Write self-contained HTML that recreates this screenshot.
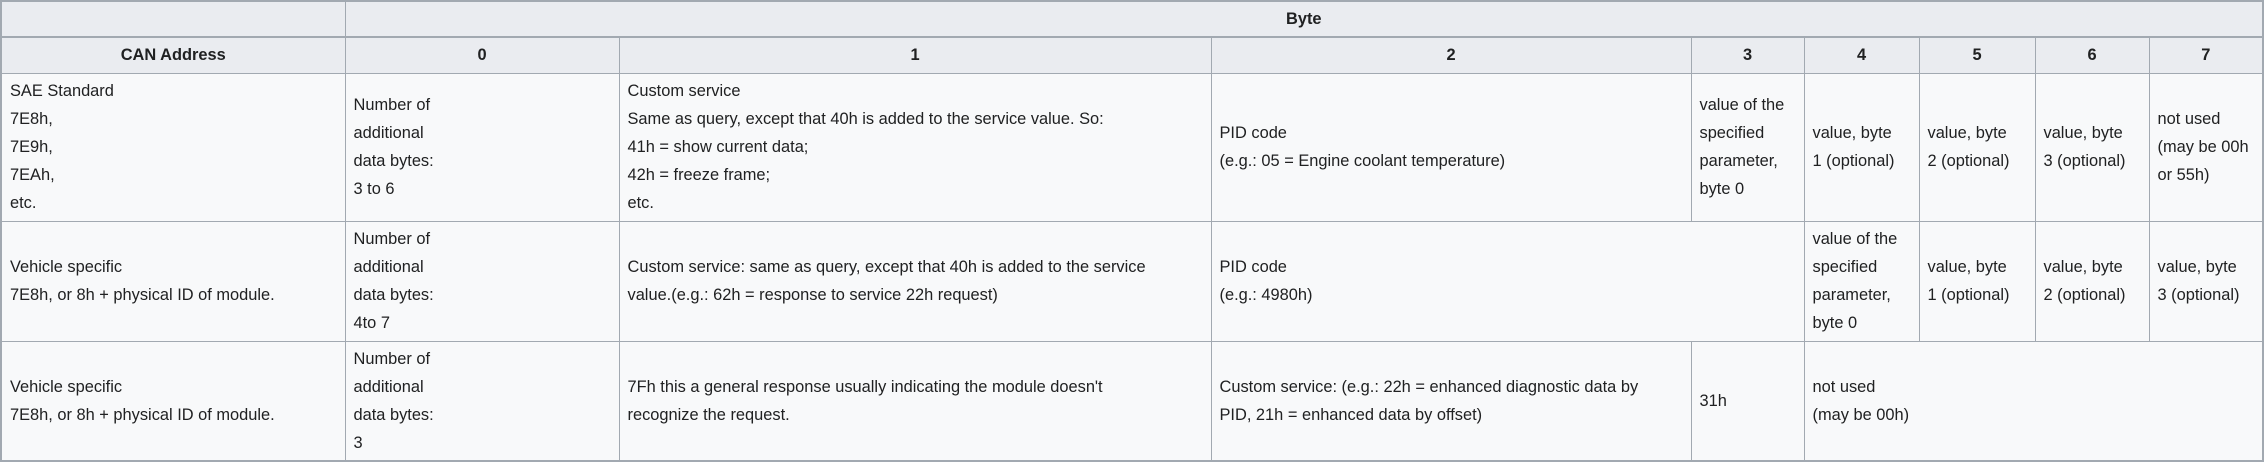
<!DOCTYPE html>
<html><head><meta charset="utf-8"><style>
html,body{margin:0;padding:0;background:#fff;}
table{border-collapse:collapse;table-layout:fixed;width:2264px;font-family:"Liberation Sans",Arial,sans-serif;font-size:16.4px;line-height:28px;color:#202122;background:#f8f9fa;border:2px solid #a2a9b1;}
td,th{border:1px solid #a2a9b1;padding:0 4px 0 8px;vertical-align:middle;text-align:left;font-weight:normal;overflow:hidden;white-space:nowrap;}
th{background:#eaecf0;font-weight:bold;text-align:center;padding:0 8px;}
tr.r1 th{border-bottom:2px solid #a2a9b1;}
tr.last td{border-bottom:2px solid #a2a9b1;}
</style></head><body>
<table>
<colgroup><col style="width:344px"><col style="width:274px"><col style="width:592px"><col style="width:480px"><col style="width:113px"><col style="width:115px"><col style="width:116px"><col style="width:114px"><col style="width:114px"></colgroup>
<tr class="r1" style="height:36px"><th></th><th colspan="8">Byte</th></tr>
<tr style="height:36px"><th>CAN Address</th><th>0</th><th>1</th><th>2</th><th>3</th><th>4</th><th>5</th><th>6</th><th>7</th></tr>
<tr style="height:148px"><td>SAE Standard<br>7E8h,<br>7E9h,<br>7EAh,<br>etc.</td><td>Number of<br>additional<br>data bytes:<br>3 to 6</td><td>Custom service<br>Same as query, except that 40h is added to the service value. So:<br>41h = show current data;<br>42h = freeze frame;<br>etc.</td><td>PID code<br>(e.g.: 05 = Engine coolant temperature)</td><td>value of the<br>specified<br>parameter,<br>byte 0</td><td>value, byte<br>1 (optional)</td><td>value, byte<br>2 (optional)</td><td>value, byte<br>3 (optional)</td><td>not used<br>(may be 00h<br>or 55h)</td></tr>
<tr style="height:120px"><td>Vehicle specific<br>7E8h, or 8h + physical ID of module.</td><td>Number of<br>additional<br>data bytes:<br>4to 7</td><td>Custom service: same as query, except that 40h is added to the service<br>value.(e.g.: 62h = response to service 22h request)</td><td colspan="2">PID code<br>(e.g.: 4980h)</td><td>value of the<br>specified<br>parameter,<br>byte 0</td><td>value, byte<br>1 (optional)</td><td>value, byte<br>2 (optional)</td><td>value, byte<br>3 (optional)</td></tr>
<tr class="last" style="height:120px"><td>Vehicle specific<br>7E8h, or 8h + physical ID of module.</td><td>Number of<br>additional<br>data bytes:<br>3</td><td>7Fh this a general response usually indicating the module doesn't<br>recognize the request.</td><td>Custom service: (e.g.: 22h = enhanced diagnostic data by<br>PID, 21h = enhanced data by offset)</td><td>31h</td><td colspan="4">not used<br>(may be 00h)</td></tr>
</table>
</body></html>
